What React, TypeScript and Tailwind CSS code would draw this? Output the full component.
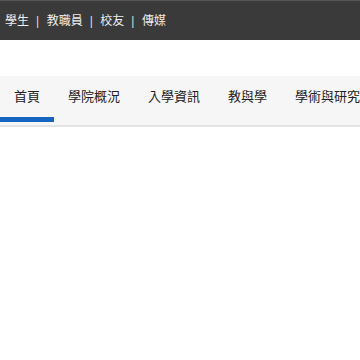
import React from 'react'

const topLinks = ['學生', '教職員', '校友', '傳媒']
const navItems = ['首頁', '學院概況', '入學資訊', '教與學', '學術與研究']

const App: React.FC = () => {
  return (
    <div className="w-[360px] h-[360px] bg-white overflow-hidden font-['Liberation_Sans','Noto_Sans_CJK_TC',sans-serif]">
      {/* 頂部連結列 */}
      <div className="h-10 bg-[#3a3a3a] border-t border-[#555] flex items-center pl-[5px] text-[12px] text-[#eee]">
        {topLinks.map((l, i) => (
          <React.Fragment key={l}>
            {i > 0 && <span className="pl-[7px] pr-[7.5px] text-[#ddd]">|</span>}
            <span>{l}</span>
          </React.Fragment>
        ))}
      </div>

      {/* 主選單 */}
      <div className="mt-9 h-[51px] bg-[#f6f6f6] border-b-2 border-[#e4e4e4] flex items-start whitespace-nowrap">
        {navItems.map((n, i) => (
          <div
            key={n}
            className={`h-[46px] pt-[1px] px-[14px] flex items-center text-[13px] text-[#222] border-b-[5px] ${
              i === 0 ? 'border-[#1565c0]' : 'border-transparent'
            }`}
          >
            {n}
          </div>
        ))}
      </div>
    </div>
  )
}

export default App
